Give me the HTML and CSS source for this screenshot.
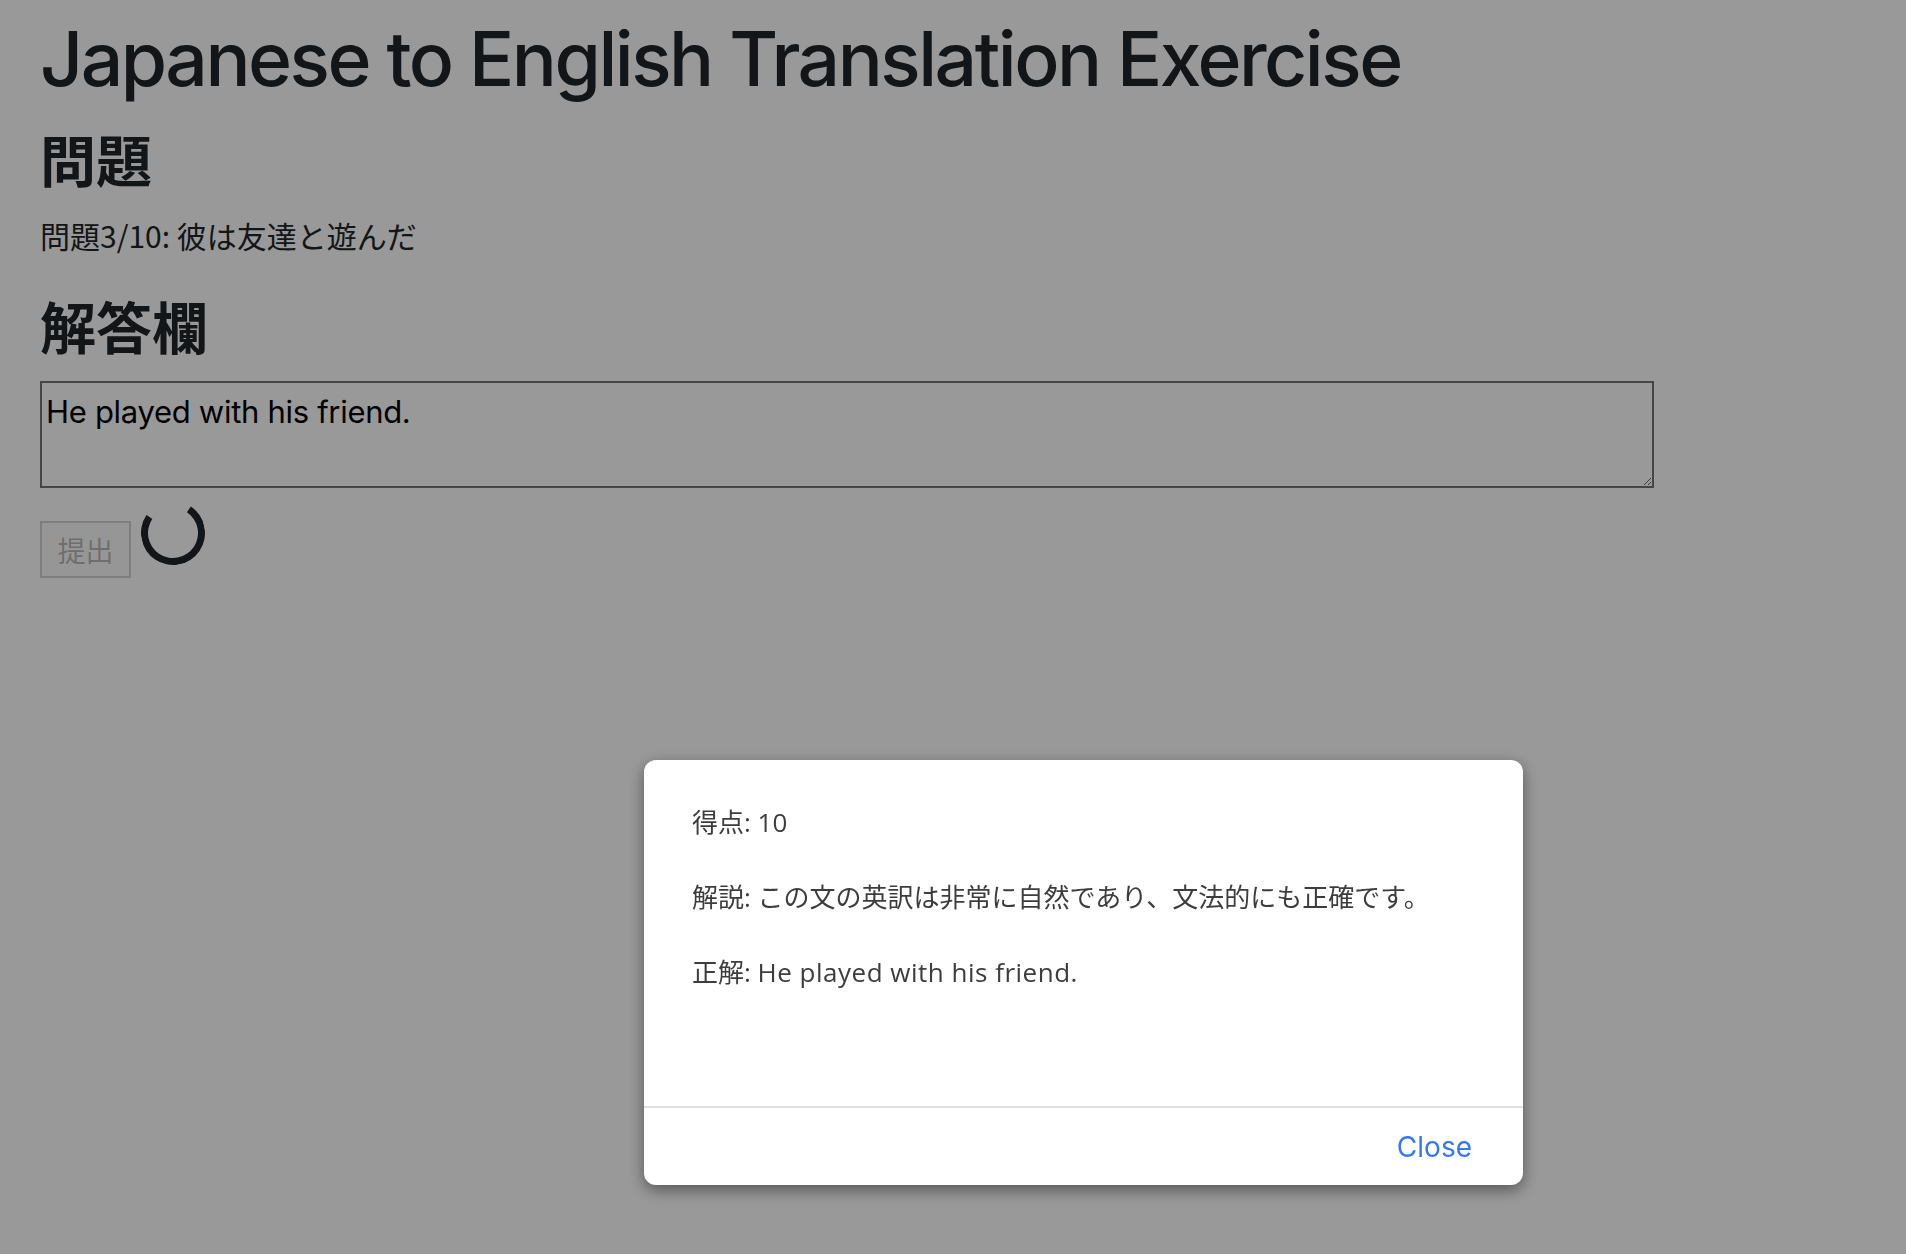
FILE: index.html
```html
<!DOCTYPE html>
<html lang="ja">
<head>
<meta charset="utf-8">
<title>Japanese to English Translation Exercise</title>
<link rel="stylesheet" href="styles.css">
</head>
<body>
<main class="page">
  <h1 class="title">Japanese to English Translation Exercise</h1>
  <h2 class="section">問題</h2>
  <p class="question">問題3/10: 彼は友達と遊んだ</p>
  <h2 class="section">解答欄</h2>
  <textarea class="answer">He played with his friend.</textarea>
  <div class="actions">
    <button class="submit" disabled>提出</button>
    <span class="spinner" aria-label="loading"></span>
  </div>
</main>
<div class="backdrop"></div>
<section class="modal" role="dialog">
  <div class="modal-body">
    <p class="modal-line">得点: 10</p>
    <p class="modal-line">解説: この文の英訳は非常に自然であり、文法的にも正確です。</p>
    <p class="modal-line">正解: <span class="en">He played with his friend.</span></p>
  </div>
  <div class="modal-footer">
    <button class="close-btn">Close</button>
  </div>
</section>
</body>
</html>
```
FILE: styles.css
```css
html, body {
  margin: 0;
  padding: 0;
  background: #ffffff;
}

body {
  color: #212529;
  font-family: "Inter", "Noto Sans CJK JP", sans-serif;
}

.page {
  padding: 14px 40px 0;
  display: flex;
  flex-direction: column;
  align-items: flex-start;
}

.title {
  margin: 0;
  font-family: "Inter", "Noto Sans CJK JP", sans-serif;
  font-size: 75px;
  line-height: 90px;
  font-weight: 500;
  letter-spacing: -2.5px;
}

.section {
  margin: 20px 0 0;
  font-family: "Noto Sans CJK JP", sans-serif;
  font-size: 56px;
  line-height: 67px;
  font-weight: 700;
}

.question {
  margin: 22px 0 0;
  font-family: "Noto Sans CJK JP", sans-serif;
  font-size: 30px;
  line-height: 45px;
}

.question + .section {
  margin-top: 33px;
}

.answer {
  margin: 23px 0 0;
  box-sizing: border-box;
  width: 1614px;
  height: 107px;
  padding: 5px 4px 3px;
  border: 2px solid #767676;
  background: #ffffff;
  color: #000000;
  font-family: "Inter", "Noto Sans CJK JP", sans-serif;
  font-size: 31px;
  line-height: 48px;
  letter-spacing: -0.3px;
}

.actions {
  margin-top: 13px;
  display: flex;
  align-items: flex-start;
  gap: 10px;
}

.submit {
  margin-top: 20px;
  box-sizing: border-box;
  height: 57px;
  padding: 0 15.5px;
  border: 2px solid rgba(118, 118, 118, 0.3);
  background: rgba(239, 239, 239, 0.3);
  color: rgba(16, 16, 16, 0.3);
  font-family: "Noto Sans CJK JP", sans-serif;
  font-size: 28px;
  line-height: 1;
}

.spinner {
  box-sizing: border-box;
  width: 64px;
  height: 64px;
  border: 7px solid #212529;
  border-right-color: transparent;
  border-radius: 50%;
  transform: rotate(-101deg);
}

.backdrop {
  position: fixed;
  inset: 0;
  background: rgba(0, 0, 0, 0.4);
}

.modal {
  position: fixed;
  left: 644px;
  top: 760px;
  width: 879px;
  height: 425px;
  box-sizing: border-box;
  display: flex;
  flex-direction: column;
  background: #ffffff;
  border-radius: 12px;
  box-shadow: 0 5px 16px rgba(0, 0, 0, 0.45);
  overflow: hidden;
}

.modal-body {
  flex: 1;
  padding: 43px 48px 0;
}

.modal-line {
  margin: 0 0 36px;
  color: #3d3d3d;
  font-family: "Open Sans", "Noto Sans CJK JP", sans-serif;
  font-size: 26px;
  line-height: 39px;
}

.modal-line .en {
  letter-spacing: 0.5px;
}

.modal-footer {
  height: 79px;
  box-sizing: border-box;
  border-top: 2px solid #dedede;
  display: flex;
  align-items: center;
  justify-content: flex-end;
  padding-right: 51px;
}

.close-btn {
  margin-top: 3px;
  border: 0;
  background: none;
  padding: 0;
  color: #3478f6;
  font-family: "Inter", sans-serif;
  font-size: 28px;
  line-height: 1.2;
}
```
